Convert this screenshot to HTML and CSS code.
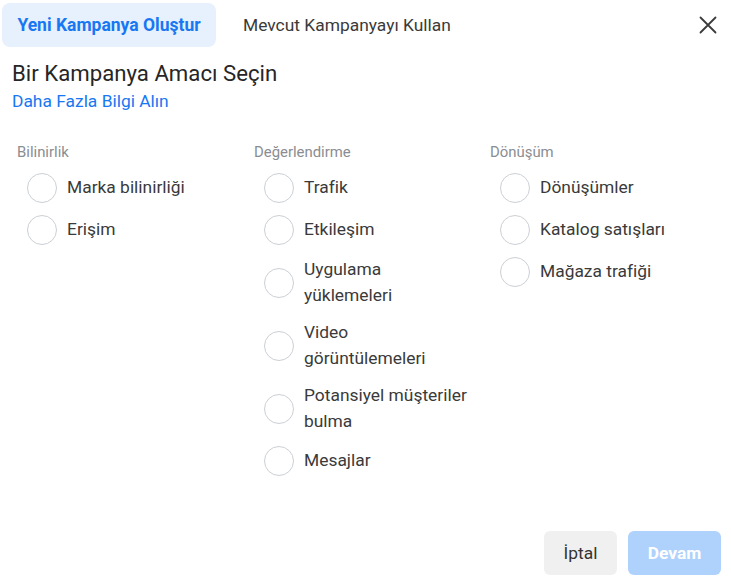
FILE: index.html
```html
<!DOCTYPE html>
<html lang="tr">
<head>
<meta charset="utf-8">
<title>Kampanya</title>
<link rel="stylesheet" href="styles.css">
</head>
<body>
<div class="dialog">
  <header class="header">
    <div class="tabs">
      <button class="tab tab-active">Yeni Kampanya Oluştur</button>
      <button class="tab">Mevcut Kampanyayı Kullan</button>
    </div>
    <button class="close" aria-label="Kapat">
      <svg width="18" height="18" viewBox="0 0 18 18"><path d="M1.5 1.5 L16.5 16.5 M16.5 1.5 L1.5 16.5" stroke="#3a3b3c" stroke-width="1.8" stroke-linecap="round" fill="none"/></svg>
    </button>
  </header>
  <main class="content">
    <h1 class="title">Bir Kampanya Amacı Seçin</h1>
    <a class="link" href="#">Daha Fazla Bilgi Alın</a>
    <div class="columns">
      <section class="group">
        <h2 class="group-title">Bilinirlik</h2>
        <label class="option"><span class="radio"></span><span class="label">Marka bilinirliği</span></label>
        <label class="option"><span class="radio"></span><span class="label">Erişim</span></label>
      </section>
      <section class="group">
        <h2 class="group-title">Değerlendirme</h2>
        <label class="option"><span class="radio"></span><span class="label">Trafik</span></label>
        <label class="option"><span class="radio"></span><span class="label">Etkileşim</span></label>
        <label class="option"><span class="radio"></span><span class="label">Uygulama yüklemeleri</span></label>
        <label class="option"><span class="radio"></span><span class="label">Video görüntülemeleri</span></label>
        <label class="option"><span class="radio"></span><span class="label">Potansiyel müşteriler bulma</span></label>
        <label class="option"><span class="radio"></span><span class="label">Mesajlar</span></label>
      </section>
      <section class="group">
        <h2 class="group-title">Dönüşüm</h2>
        <label class="option"><span class="radio"></span><span class="label">Dönüşümler</span></label>
        <label class="option"><span class="radio"></span><span class="label">Katalog satışları</span></label>
        <label class="option"><span class="radio"></span><span class="label">Mağaza trafiği</span></label>
      </section>
    </div>
  </main>
  <footer class="footer">
    <button class="btn btn-cancel">İptal</button>
    <button class="btn btn-primary">Devam</button>
  </footer>
</div>
</body>
</html>
```

FILE: styles.css
```css
* { box-sizing: border-box; }
html, body { margin: 0; padding: 0; background: #fff; }
body {
  font-family: Roboto, "Noto Sans", "Liberation Sans", sans-serif;
  color: #1c1e21;
}
.dialog {
  width: 731px;
  height: 587px;
  display: flex;
  flex-direction: column;
}
.header {
  display: flex;
  justify-content: space-between;
  align-items: center;
  padding: 3px 14px 0 2px;
}
.tabs { display: flex; gap: 12px; }
.tab {
  height: 44px;
  padding: 0 15px;
  border: none;
  border-radius: 8px;
  background: transparent;
  font-family: inherit;
  font-size: 17.4px;
  color: #3a3a3a;
  cursor: pointer;
}
.tab-active {
  width: 214px;
  padding: 0;
  background: #e7f0fd;
  color: #1877f2;
  font-weight: 700;
  font-size: 17.5px;
}
.close {
  width: 18px; height: 18px;
  padding: 0; border: none; background: none;
  display: flex;
}
.content {
  flex: 1;
  padding: 12px 0 0 12px;
}
.title {
  margin: 0;
  font-size: 22.2px;
  line-height: 28px;
  font-weight: 400;
  color: #262626;
}
.link {
  display: block;
  margin-top: 2px;
  font-size: 17.4px;
  line-height: 24px;
  color: #1877f2;
  text-decoration: none;
}
.columns {
  display: grid;
  grid-template-columns: 237px 236px 1fr;
  margin-top: 30px;
  padding-left: 5px;
}
.group { display: flex; flex-direction: column; gap: 12px; }
.group-title {
  margin: 0 0 0;
  font-size: 14.9px;
  line-height: 18px;
  font-weight: 400;
  color: #8a8d91;
}
.option {
  display: flex;
  align-items: center;
  gap: 10px;
  padding-left: 10px;
}
.radio {
  flex: none;
  width: 30px;
  height: 30px;
  border: 1px solid #ccd0d5;
  border-radius: 50%;
}
.label {
  font-size: 17.4px;
  line-height: 25.5px;
  max-width: 168px;
  color: #3a3a3a;
}
.footer {
  display: flex;
  justify-content: flex-end;
  gap: 11px;
  padding: 0 10px 12px 0;
}
.btn {
  height: 44px;
  border: none;
  border-radius: 6px;
  font-family: inherit;
  font-size: 17.4px;
}
.btn-cancel {
  width: 73px;
  background: #f0f0f0;
  color: #333;
}
.btn-primary {
  width: 93px;
  background: #afd2fc;
  color: #fff;
  font-weight: 700;
}
```
